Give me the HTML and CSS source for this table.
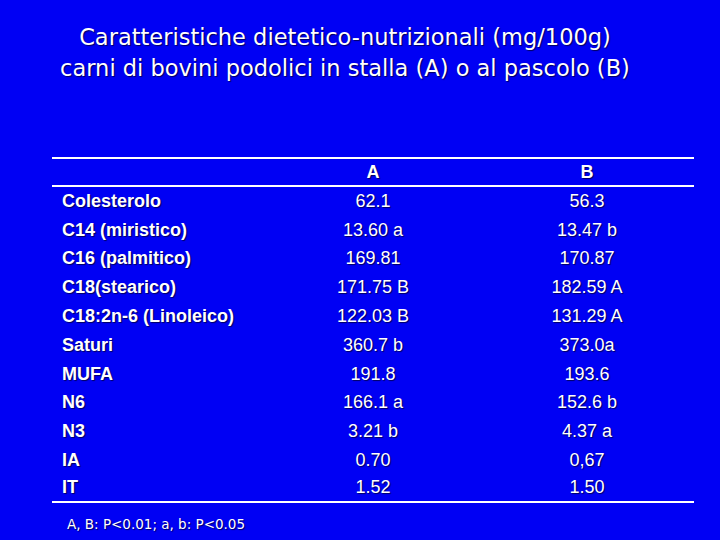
FILE: index.html
```html
<!DOCTYPE html>
<html lang="it">
<head>
  <meta charset="UTF-8" />
  <title>Caratteristiche dietetico-nutrizionali</title>
  <link rel="stylesheet" href="styles.css">
</head>
<body>
  <div class="slide">
    <h1 class="title">
      Caratteristiche dietetico-nutrizionali (mg/100g)<br>
      carni di bovini podolici in stalla (A) o al pascolo (B)
    </h1>

    <table class="data">
      <thead>
        <tr><th></th><th>A</th><th>B</th></tr>
      </thead>
      <tbody>
        <tr><td>Colesterolo</td><td>62.1</td><td>56.3</td></tr>
        <tr><td>C14 (miristico)</td><td>13.60 a</td><td>13.47 b</td></tr>
        <tr><td>C16 (palmitico)</td><td>169.81</td><td>170.87</td></tr>
        <tr><td>C18(stearico)</td><td>171.75 B</td><td>182.59 A</td></tr>
        <tr><td>C18:2n-6 (Linoleico)</td><td>122.03 B</td><td>131.29 A</td></tr>
        <tr><td>Saturi</td><td>360.7 b</td><td>373.0a</td></tr>
        <tr><td>MUFA</td><td>191.8</td><td>193.6</td></tr>
        <tr><td>N6</td><td>166.1 a</td><td>152.6 b</td></tr>
        <tr><td>N3</td><td>3.21 b</td><td>4.37 a</td></tr>
        <tr><td>IA</td><td>0.70</td><td>0,67</td></tr>
        <tr class="last"><td>IT</td><td>1.52</td><td>1.50</td></tr>
      </tbody>
    </table>

    <div class="note">A, B: P&lt;0.01; a, b: P&lt;0.05</div>
  </div>
</body>
</html>
```

FILE: styles.css
```css
body {
  margin: 0;
  background: #0000f4;
  color: #fff;
  overflow: hidden;
}

.slide {
  width: 720px;
  height: 540px;
  display: flex;
  flex-direction: column;
}

.title {
  margin: 22px 0 0 0;
  padding-right: 30px;
  text-align: center;
  font-family: "DejaVu Sans", sans-serif;
  font-weight: normal;
  font-size: 22.5px;
  line-height: 31px;
  text-shadow: 1px 1px 1px #000060;
}

.data {
  margin: 73px 0 0 52px;
  width: 642px;
  table-layout: fixed;
  border-collapse: collapse;
  border-top: 2px solid #fff;
  border-bottom: 2px solid #fff;
  font-family: "Liberation Sans", Arial, sans-serif;
  font-size: 18px;
  text-shadow: 1px 1px 1px #000060;
}

.data thead tr {
  border-bottom: 2px solid #fff;
}

.data th {
  width: 214px;
  height: 26px;
  font-weight: bold;
  padding: 0;
}

.data td {
  height: 28.8px;
  padding: 0;
  text-align: center;
}

.data .last td {
  height: 26px;
}

.data td:first-child {
  text-align: left;
  padding-left: 10px;
  font-weight: bold;
}

.note {
  margin: 13px 0 0 67px;
  font-family: "DejaVu Sans", sans-serif;
  font-size: 13.5px;
  text-shadow: 1px 1px 1px #000060;
}
```
